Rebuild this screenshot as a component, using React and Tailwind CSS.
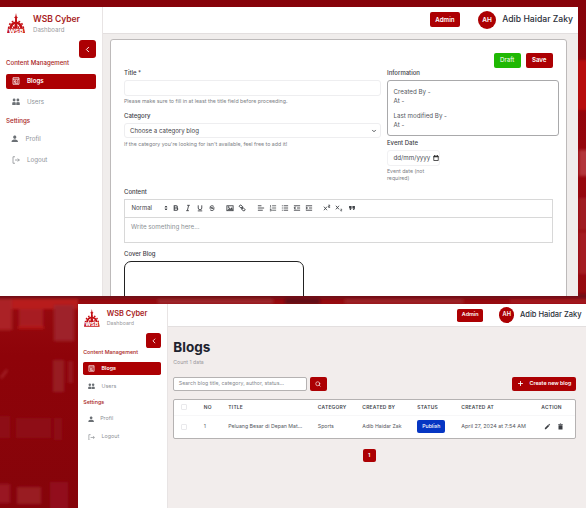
import React from "react";
import { MdPerson, MdFormatQuote, MdEdit } from "react-icons/md";
import { ChevronLeft, ChevronDown, Search, Plus } from "lucide-react";

function Backdrop() {
  return (
    <svg className="absolute inset-0 -z-10" width="586" height="508" viewBox="0 0 586 508">
      <defs>
        <linearGradient id="base" x1="0" y1="0" x2="0" y2="1">
          <stop offset="0" stopColor="#86030a" />
          <stop offset="0.3" stopColor="#96050c" />
          <stop offset="0.6" stopColor="#960a0f" />
          <stop offset="0.7" stopColor="#8e0309" />
          <stop offset="1" stopColor="#85040a" />
        </linearGradient>
        <filter id="soft"><feGaussianBlur stdDeviation="1.8" /></filter>
      </defs>
      <rect width="586" height="508" fill="url(#base)" />
      <g filter="url(#soft)">
        <rect x="-5" y="294" width="596" height="4.500" fill="#6c1014" />
        <rect x="-5" y="299" width="83" height="10" fill="#b81a1c" />
        <rect x="-5" y="299" width="17" height="31" fill="#ab2027" />
        <rect x="19" y="309" width="24" height="19" fill="#a71b20" />
        <rect x="54" y="305" width="20" height="36" fill="#9e2229" />
        <rect x="18" y="326" width="26" height="3" fill="#b41815" />
        <rect x="53" y="360" width="11" height="32" fill="#981a21" />
        <rect x="68" y="361" width="5" height="22" fill="#98141b" />
        <rect x="-5" y="416" width="15" height="22" fill="#8e0c14" />
        <rect x="16" y="418" width="35" height="20" fill="#8e0c14" />
        <rect x="54" y="418" width="8" height="22" fill="#8e0c14" />
        <rect x="-5" y="484" width="15" height="19" fill="#991822" />
        <rect x="17" y="487" width="24" height="17" fill="#991b24" />
        <rect x="50" y="482" width="18" height="30" fill="#92111a" />
        <path d="M1 378l6-8" stroke="#b03238" strokeWidth="1.500" />
        <rect x="158" y="299" width="115" height="5" fill="#9c272b" />
        <rect x="285" y="299" width="35" height="5" fill="#5f1015" />
        <rect x="345" y="299" width="118" height="5" fill="#9c2226" />
        <rect x="510" y="299" width="80" height="5" fill="#a3191e" />
        <rect x="577" y="60" width="14" height="50" fill="#b8100f" />
        <rect x="579" y="150" width="12" height="26" fill="#b3343b" />
        <rect x="579" y="198" width="12" height="32" fill="#a01b22" />
        <rect x="579" y="232" width="12" height="42" fill="#a51a20" />
      </g>
    </svg>
  );
}

function Logo() {
  return (
    <svg className="ml-[1px] h-[20.500px] w-[18px]" viewBox="0 0 38 42" preserveAspectRatio="none" fill="#c41015">
      <path d="M19 0l1.500 7 2.500 2-2 1.500V20h-4v-9.500L15 9l2.500-2z" />
      <path d="M7.500 31.500a11.500 11.500 0 0 1 23 0" fill="none" stroke="#c41015" strokeWidth="5" />
      <path d="M3.500 31.500a15.500 15.500 0 0 1 31 0" fill="none" stroke="#c41015" strokeWidth="3.500" strokeDasharray="3.700 3.700" />
      <path d="M18 17h2l3.500 14h-9zM10 23l7 8h-4zM28 23l-7 8h4z" />
      <path d="M2 31h34l2 11H0z" />
      <text x="19" y="40.500" textAnchor="middle" fontFamily="Inter, sans-serif" fontWeight="800" fontSize="10.500" textLength="32" lengthAdjust="spacingAndGlyphs" fill="#fff">WSB</text>
    </svg>
  );
}

function BlogIcon() {
  return (
    <svg className="size-[8px]" viewBox="0 0 16 16" fill="none" stroke="#fff" strokeWidth="1.500">
      <path d="M2 1.500h12v13H2zM2 4.500h12M5 7.500h3v3H5zM10 7.500h2M10 10h2M5 12.500h7" />
    </svg>
  );
}
function UsersIcon() {
  return (
    <svg className="size-[8px]" viewBox="0 0 16 16" fill="#6b7075">
      <circle cx="4.200" cy="4" r="2.800" /><circle cx="11.800" cy="4" r="2.800" />
      <path d="M.5 14V9q3.700-2 7 0v5zM8.500 14V9q3.300-2 7 0v5z" />
    </svg>
  );
}
function LogoutIcon() {
  return (
    <svg className="size-[8px]" viewBox="0 0 16 16" fill="none" stroke="#85898e" strokeWidth="1.500">
      <path d="M6 1.500H2v13h4M6 8h9M11.500 5l3 3-3 3" />
    </svg>
  );
}

const navText = "text-[6.2px] text-[#8e9298]";

function Sidebar() {
  return (
    <aside className="flex w-[103px] shrink-0 flex-col border-r border-[#e8e4e4] bg-white pl-[6px] pr-[6px] leading-none">
      <div className="flex h-[33.400px] pt-[5.500px]">
        <Logo />
        <div className="ml-[8px] flex flex-col pt-[1px]">
          <span className="text-[8.500px] font-semibold leading-[10px] text-[#a81c22]">WSB Cyber</span>
          <span className="mt-[2px] text-[6.100px] leading-[8px] text-[#9a9a9e]">Dashboard</span>
        </div>
      </div>
      <div className="flex h-[17.500px] w-[17.500px] items-center justify-center self-end rounded-[3px] bg-[#ac0003]">
        <ChevronLeft className="size-[9px] text-white" strokeWidth={2.500} />
      </div>
      <div className="mt-[.3px] flex h-[10px] items-center text-[6.100px] font-medium text-[#a81c22]">Content Management</div>
      <div className="mt-[5.500px] flex h-[15px] items-center gap-[7px] rounded-[2px] bg-[#ac0003] pl-[6px]">
        <BlogIcon />
        <span className="text-[6.200px] font-semibold text-white">Blogs</span>
      </div>
      <div className="mt-[5.800px] flex h-[15px] items-center gap-[7px] pl-[6px]">
        <UsersIcon />
        <span className={navText}>Users</span>
      </div>
      <div className="mt-[6.500px] flex h-[10px] items-center text-[6.200px] font-medium text-[#a81c22]">Settings</div>
      <div className="mt-[5.500px] flex h-[15px] items-center gap-[6px] pl-[4px]">
        <MdPerson className="size-[9.500px] text-[#6b7075]" />
        <span className={navText}>Profil</span>
      </div>
      <div className="mt-[6px] flex h-[15px] items-center gap-[7px] pl-[6px]">
        <LogoutIcon />
        <span className={navText}>Logout</span>
      </div>
    </aside>
  );
}

function Header() {
  return (
    <header className="flex h-[26.500px] shrink-0 items-center justify-end border-b border-[#e3dfdf] bg-white pr-[5px] leading-none">
      <span className="flex h-[15px] w-[30.500px] items-center justify-center rounded-[2px] bg-[#ac0003] text-[6.200px] font-semibold text-white">Admin</span>
      <span className="ml-[18px] flex size-[17.500px] items-center justify-center rounded-full bg-[#ac0003] text-[6.500px] font-semibold text-white">AH</span>
      <span className="ml-[6.500px] text-[8.650px] font-medium text-[#2b303a]">Adib Haidar Zaky</span>
    </header>
  );
}

const label = "flex h-[8px] items-center text-[6px] font-medium text-[#3c4046]";
const help = "flex h-[7px] items-center text-[5.250px] text-[#7c8085]";

function Q({ children }) {
  return (
    <svg className="size-[8px] shrink-0" viewBox="0 0 18 18" fill="none" stroke="#3f4247" strokeWidth="2">
      {children}
    </svg>
  );
}

function Toolbar() {
  return (
    <div className="flex h-[18.500px] items-center border border-[#d8d8d8] pl-[6.500px] text-[#3f4247]">
      <span className="w-[30px] text-[6px]">Normal</span>
      <Q><path d="M6.500 7L9 4.500 11.500 7zM6.500 11L9 13.500l2.500-2.500z" fill="#3f4247" strokeWidth="1.500" /></Q>
      <div className="ml-[2px] flex gap-[4px]">
        <Q><path d="M5 4h4.500a2.500 2.500 0 0 1 0 5H5zM5 9h5.500a2.500 2.500 0 0 1 0 5H5z" strokeWidth="2.400" /></Q>
        <Q><path d="M7 3h6M5 15h6M10.500 3l-3 12" /></Q>
        <Q><path d="M5 3v6a4 4 0 0 0 8 0V3M4 15.500h10" /></Q>
        <Q><path d="M13 5.500C12 3.500 5 3 5 6.500 5 9 13 9 13 12c0 3.500-7 3.500-8.500.5M3 9h12" /></Q>
      </div>
      <div className="ml-[10.500px] flex gap-[4px]">
        <Q><rect x="2" y="4" width="14" height="11" /><path d="M4 13l4-4 2 2 3-3 2 5z" fill="#3f4247" strokeWidth="1" /><circle cx="6" cy="7" r="1" /></Q>
        <Q><rect x="2.500" y="3" width="8" height="5" rx="2.500" transform="rotate(35 6 6)" /><rect x="8" y="9.500" width="8" height="5" rx="2.500" transform="rotate(35 12 12)" /><path d="M7 7l4 4" /></Q>
      </div>
      <div className="ml-[10.500px] flex gap-[4px]">
        <Q><path d="M2 4h8M2 9h14M2 14h11" /></Q>
        <Q><path d="M7 4h9M7 9h9M7 14h9M3.500 2.500v4M2 9h3M2 12.500h3v3H2" strokeWidth="1.700" /></Q>
        <Q><path d="M6 4h10M6 9h10M6 14h10M2 4h2M2 9h2M2 14h2" /></Q>
        <Q><path d="M2 4h14M9 9h7M2 14h14" /><path d="M5 6v6L2 9z" fill="#3f4247" strokeWidth="1" /></Q>
        <Q><path d="M2 4h14M9 9h7M2 14h14" /><path d="M3 6v6l3-3z" fill="#3f4247" strokeWidth="1" /></Q>
      </div>
      <div className="ml-[10.500px] flex items-center gap-[4px]">
        <Q><path d="M2 6l7 8M9 6l-7 8M12 2.500h3v2.500h-2.500v2.500H16" strokeWidth="1.900" /></Q>
        <Q><path d="M2 4l7 8M9 4l-7 8" /><path d="M12.500 11.500h2.500v2h-2v2h3" strokeWidth="1.500" /></Q>
        <MdFormatQuote className="size-[10px]" />
      </div>
    </div>
  );
}

function BlogForm() {
  return (
    <div className="min-h-0 flex-1 bg-[#f0edec] pl-[7px] pr-[11.500px] pt-[5.400px]">
      <div className="flex h-[320px] flex-col rounded-t-[3px] border border-[#bdbaba] bg-white pl-[13px] pt-[13px] leading-none">
        <div className="mr-[12.800px] flex h-[15px] justify-end gap-[5px] text-[6.200px] text-white">
          <span className="flex w-[27px] items-center justify-center rounded-[2px] bg-[#1fb803]">Draft</span>
          <span className="flex w-[27px] items-center justify-center rounded-[2px] bg-[#ac0003] font-semibold">Save</span>
        </div>
        <div className="mt-[1.200px] flex h-[118px]">
          <div className="flex w-[257px] flex-col">
            <div className={label}>Title *</div>
            <div className="mt-[3px] h-[15.500px] rounded-[3px] border border-[#eeeef0]" />
            <div className={help + " mt-[2.800px]"}>Please make sure to fill in at least the title field before proceeding.</div>
            <div className={label + " mt-[6.500px]"}>Category</div>
            <div className="mt-[3px] flex h-[15.500px] items-center justify-between rounded-[3px] border border-[#eeeef0] pl-[5px] pr-[3px] text-[6.100px] text-[#3f4247]">
              <span>Choose a category blog</span>
              <ChevronDown className="size-[6px]" strokeWidth={3.500} />
            </div>
            <div className={help + " mt-[2.800px]"}>If the category you're looking for isn't available, feel free to add it!</div>
          </div>
          <div className="ml-[6px] flex w-[172px] flex-col">
            <div className={label}>Information</div>
            <div className="mt-[3px] flex h-[55.500px] flex-col rounded-[3px] border border-[#a9a9ab] pl-[5.500px] pt-[6px] text-[6.200px] leading-[9px] text-[#54585e]">
              <span>Created By -</span>
              <span>At -</span>
              <span className="mt-[6px]">Last modified By -</span>
              <span>At -</span>
            </div>
            <div className={label + " mt-[3.500px]"}>Event Date</div>
            <div className="mt-[3.300px] flex h-[15.500px] w-[53px] items-center rounded-[3px] border border-[#f1f1f3] pl-[5.500px] text-[6.200px] text-[#4a4e54]">
              <span className="w-[39px]">dd/mm/yyyy</span>
              <svg className="size-[6px] shrink-0" viewBox="0 0 12 12" fill="none" stroke="#222">
                <path d="M1.500 2.500h9v8.500h-9z" strokeWidth="1.500" /><path d="M1 3.500h10M3.500 0v3M8.500 0v3" strokeWidth="2" />
              </svg>
            </div>
            <div className="mt-[2.500px] w-[45px] text-[5.200px] leading-[6.700px] text-[#7c8085]">Event date (not required)</div>
          </div>
        </div>
        <div className="mr-[13px] flex flex-col">
          <div className={label + " mt-[1px]"}>Content</div>
          <div className="mt-[3px]"><Toolbar /></div>
          <div className="h-[25px] border border-t-0 border-[#d8d8d8] pl-[6px] pt-[6.500px] text-[6.250px] text-[#8b8f94]">Write something here...</div>
          <div className={label + " mt-[7px]"}>Cover Blog</div>
          <div className="mt-[3px] h-[80px] w-[180px] rounded-[7px] border border-[#222]" />
        </div>
      </div>
    </div>
  );
}

const cols = "grid grid-cols-[22.500px_24.500px_89.500px_44.500px_55px_44px_80px_1fr] items-center pl-[7px]";

function BlogList() {
  return (
    <div className="flex min-h-0 flex-1 flex-col bg-[#f2edec] pl-[5.700px] pr-[10px] pt-[13.200px] leading-none">
      <h1 className="flex h-[15px] items-center text-[13.500px] font-bold text-[#20222e]">Blogs</h1>
      <div className="mt-[3.500px] flex h-[7px] items-center text-[5.200px] text-[#9a989c]">Count 1 data</div>
      <div className="mt-[11.500px] flex h-[13.500px] gap-[2.500px]">
        <div className="flex w-[134px] items-center rounded-[2px] border border-[#b5b2b2] bg-white pl-[4.500px] text-[5.200px] text-[#86898e]">Search blog title, category, author, status...</div>
        <div className="flex w-[17px] items-center justify-center rounded-[2px] bg-[#ac0003]">
          <Search className="size-[6px] text-white" strokeWidth={2.500} />
        </div>
        <div className="ml-auto flex w-[64px] items-center rounded-[2px] bg-[#ac0003] pl-[5px] text-[5.300px] font-semibold text-white">
          <Plus className="mr-[5.500px] size-[7px]" strokeWidth={3} />Create new blog
        </div>
      </div>
      <div className="mt-[8px] h-[40px] rounded-[2px] border border-[#b5b2b2] bg-white">
        <div className={cols + " h-[15px] text-[4.900px] font-semibold tracking-[.25px] text-[#45494f]"}>
          <span className="size-[6px] rounded-[1px] border border-[#e9e9ec]" />
          <span>NO</span><span>TITLE</span><span>CATEGORY</span><span>CREATED BY</span><span>STATUS</span><span>CREATED AT</span><span>ACTION</span>
        </div>
        <div className={cols + " h-[23px] border-t border-[#f7f7f8] text-[5.200px] text-[#54585e]"}>
          <span className="size-[6px] rounded-[1px] border border-[#e9e9ec]" />
          <span>1</span><span>Peluang Besar di Depan Mat...</span><span>Sports</span><span>Adib Haidar Zak</span>
          <span className="flex h-[13px] w-[28px] items-center justify-center rounded-[2px] bg-[#0636c3] font-medium text-white">Publish</span>
          <span className="text-[5.400px]">April 27, 2024 at 7:54 AM</span>
          <span className="flex items-center gap-[6px] pl-[3px] text-[#3a3d42]">
            <MdEdit className="size-[7px]" />
            <svg className="size-[7px]" viewBox="0 0 14 14" fill="currentColor"><path d="M2.500 2h3l.5-1h2l.5 1h3v1.500h-9zM3 4.500h8V13H3z" /></svg>
          </span>
        </div>
      </div>
      <div className="mr-[11px] mt-[10px] flex h-[13.500px] w-[13px] items-center justify-center self-center rounded-[2px] bg-[#ac0003] text-[5.400px] font-semibold text-white">1</div>
    </div>
  );
}

export default function App() {
  return (
    <div className="relative isolate flex h-[508px] w-[586px] flex-col gap-[8px] overflow-hidden pt-[7px] font-['Inter','Liberation_Sans',sans-serif]">
      <Backdrop />
      <section className="flex h-[289px] w-[578px] shrink-0 overflow-hidden bg-white">
        <Sidebar />
        <div className="flex min-w-0 flex-1 flex-col">
          <Header />
          <BlogForm />
        </div>
      </section>
      <section className="flex h-[204px] w-[508px] shrink-0 self-end overflow-hidden bg-white">
        <div className="flex shrink-0 [zoom:0.87]"><Sidebar /></div>
        <div className="flex min-w-0 flex-1 flex-col">
          <div className="[zoom:0.87]"><Header /></div>
          <BlogList />
        </div>
      </section>
    </div>
  );
}
